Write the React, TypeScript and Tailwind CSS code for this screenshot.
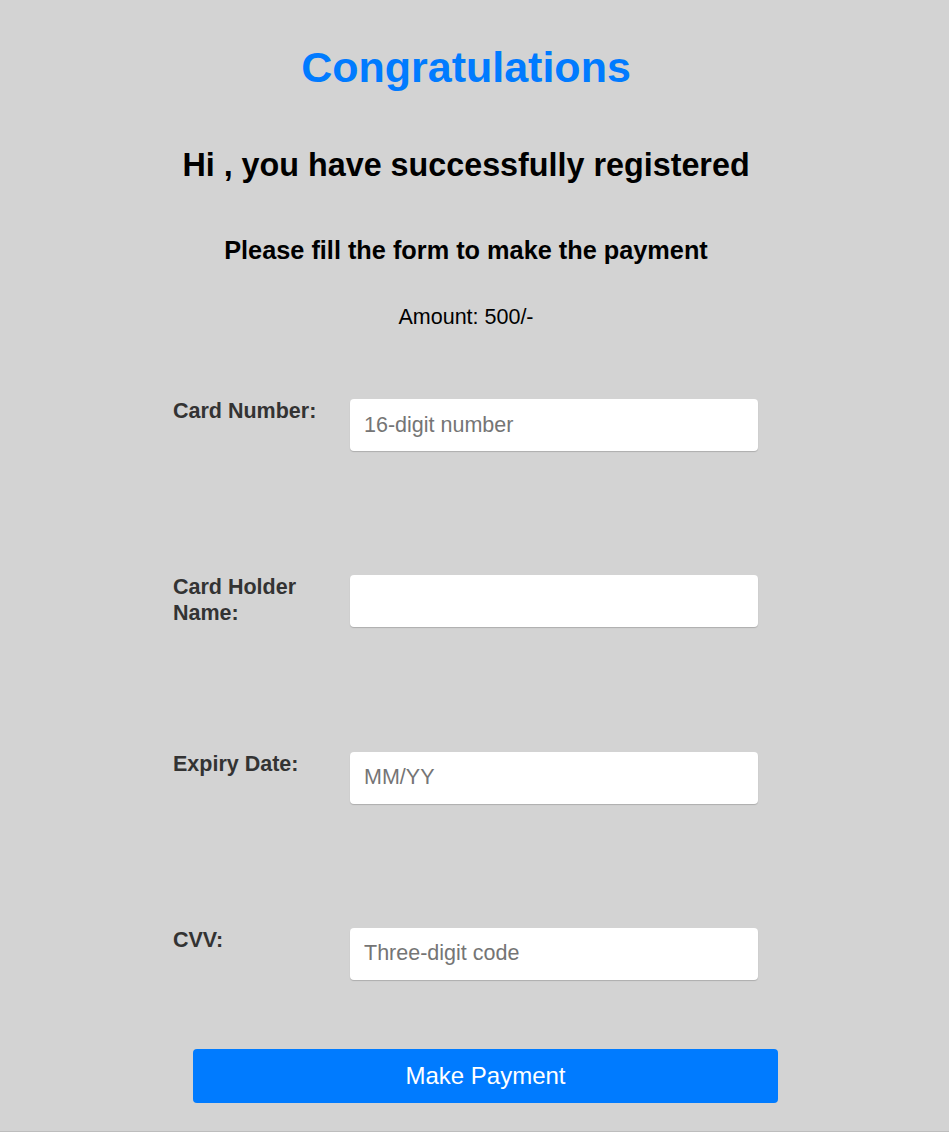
import { useState } from 'react';

const fields = [
  { label: 'Card Number:', placeholder: '16-digit number' },
  { label: 'Card Holder Name:', placeholder: '' },
  { label: 'Expiry Date:', placeholder: 'MM/YY' },
  { label: 'CVV:', placeholder: 'Three-digit code' },
];

const App = () => {
  const [values, setValues] = useState<string[]>(['', '', '', '']);

  return (
    <div className="h-[1132px] bg-[#d3d3d3] border-b border-[#bdbdbd] font-['Liberation_Sans',Arial,sans-serif] overflow-hidden">
      <div className="w-[932px] flex flex-col items-center text-center">
        <h1 className="mt-[42px] text-[43px] leading-[50px] font-bold text-[#007bff]">Congratulations</h1>
        <h2 className="mt-[54px] text-[32.3px] leading-[38px] font-bold text-black">
          Hi , you have successfully registered
        </h2>
        <h3 className="mt-[51px] text-[25.3px] leading-[30px] font-bold text-black">
          Please fill the form to make the payment
        </h3>
        <p className="mt-[40px] text-[21.5px] leading-[25px] text-black">Amount: 500/-</p>
      </div>

      <form className="ml-[173px] w-[585px] mt-[69px] flex flex-col gap-[124.3px]">
        {fields.map((f, i) => (
          <div key={f.label} className="flex items-start">
            <label className="w-[177px] -mt-px text-[21.5px] leading-[26px] font-bold text-[#333] pr-4">
              {f.label}
            </label>
            <input
              type="text"
              value={values[i]}
              placeholder={f.placeholder}
              onChange={(e) => {
                const next = [...values];
                next[i] = e.target.value;
                setValues(next);
              }}
              className="w-[408px] h-[52px] bg-white rounded-[4px] px-[14px] text-[21.5px] text-[#333] placeholder:text-[#757575] outline-none shadow-[0_1px_1px_rgba(0,0,0,0.18)]"
            />
          </div>
        ))}
      </form>

      <button
        type="button"
        className="ml-[193px] mt-[69px] w-[585px] h-[54px] bg-[#007bff] rounded-[4px] text-white text-[24px]"
      >
        Make Payment
      </button>
    </div>
  );
};

export default App;
